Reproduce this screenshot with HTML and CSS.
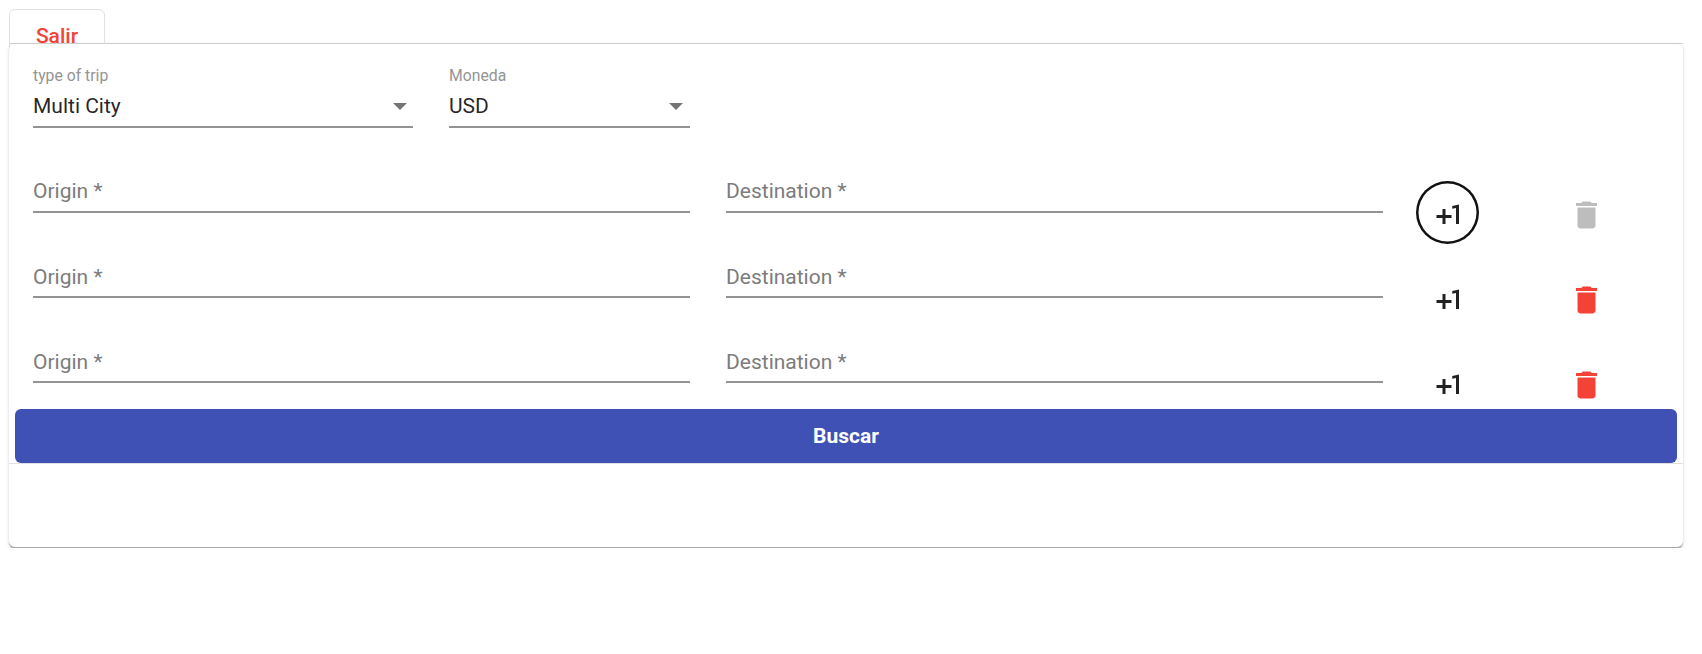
FILE: index.html
```html
<!DOCTYPE html>
<html lang="es">
<head>
<meta charset="utf-8">
<title>Buscar</title>
<link rel="stylesheet" href="styles.css">
</head>
<body>
<svg class="defs" width="0" height="0">
  <symbol id="plus-one" viewBox="0 0 24 24"><path d="M10 8H8v4H4v2h4v4h2v-4h4v-2h-4zm4.500-1.920V7.900l2.500-.5V18h2V5z"/></symbol>
  <symbol id="trash" viewBox="0 0 24 24"><path d="M6 19c0 1.100.9 2 2 2h8c1.100 0 2-.9 2-2V7H6v12zM19 4h-3.500l-1-1h-5l-1 1H5v2h14V4z"/></symbol>
</svg>
<header class="bar"><button class="exit">Salir</button></header>
<main class="card">
  <div class="search">
    <div class="grid selects">
      <div class="field trip"><span class="label">type of trip</span><span class="value">Multi City<i class="arrow"></i></span></div>
      <div class="field currency"><span class="label">Moneda</span><span class="value">USD<i class="arrow"></i></span></div>
    </div>
    <div class="grid leg first">
      <div class="field">Origin *</div><div class="field">Destination *</div>
      <button class="add ring"><svg class="icon"><use href="#plus-one"/></svg></button>
      <button class="remove off"><svg class="icon"><use href="#trash"/></svg></button>
    </div>
    <div class="grid leg">
      <div class="field">Origin *</div><div class="field">Destination *</div>
      <button class="add"><svg class="icon"><use href="#plus-one"/></svg></button>
      <button class="remove"><svg class="icon"><use href="#trash"/></svg></button>
    </div>
    <div class="grid leg">
      <div class="field">Origin *</div><div class="field">Destination *</div>
      <button class="add"><svg class="icon"><use href="#plus-one"/></svg></button>
      <button class="remove"><svg class="icon"><use href="#trash"/></svg></button>
    </div>
  </div>
  <button class="submit">Buscar</button>
  <div class="results"></div>
</main>
</body>
</html>
```
FILE: styles.css
```css
* { box-sizing: border-box; }
body {
  margin: 0;
  padding: 9px 19px 0 9px;
  background: #fff;
  color: rgba(0, 0, 0, .87);
  font: 400 21px/24px Roboto, sans-serif;
}
button { font: inherit; border: 0; background: none; padding: 0; margin: 0; }
.defs { display: block; height: 0; }
.bar { height: 35px; border-bottom: 1px solid #d2d2d2; }
.exit {
  display: block;
  width: 96px;
  height: 54px;
  border: 1px solid #e0e0e0;
  border-radius: 6px;
  color: #f44336;
  font-weight: 500;
}
.card {
  position: relative;
  height: 504px;
  background: #fff;
  border-bottom: 1px solid #a8a8a8;
  border-radius: 6px;
  box-shadow: 0 1px 1px rgba(0, 0, 0, .24), 0 1px 4px rgba(0, 0, 0, .12);
}
.search { height: 365px; padding: 19px 0 0 24px; }
.grid { display: grid; align-items: start; }
.selects { grid-template-columns: 380px 241px; column-gap: 36px; height: 65px; }
.selects .field { display: flex; flex-direction: column; height: 65px; border-bottom: 2px solid #949494; }
.label { font-size: 15.75px; line-height: 26px; color: #949494; }
.value { display: flex; justify-content: space-between; align-items: center; padding: 4px 6px 0 0; line-height: 26px; }
.currency .value { padding-right: 7px; }
.arrow { border: 7px solid transparent; border-top-color: #757575; border-bottom: 0; }
.leg { grid-template-columns: 657px 657px 62px 62px; column-gap: 36px; height: 85px; }
.leg.first { margin-top: 49px; }
.leg .field { height: 36px; border-bottom: 2px solid #949494; color: #7c7c7c; padding-top: 3px; }
.leg.first .field { padding-top: 2px; }
.add, .remove {
  display: flex;
  align-items: center;
  justify-content: center;
  width: 63px;
  height: 63px;
  border-radius: 50%;
  color: #212121;
  margin: 4px 0 0 -3px;
}
.ring { box-shadow: inset 0 0 0 2.5px #111; }
.remove { color: #f44336; margin-left: 37.5px; }
.icon { width: 36px; height: 36px; fill: currentColor; margin-top: 5px; transform: translateX(.5px); }
.remove.off { color: #bdbdbd; }
.submit {
  display: block;
  width: calc(100% - 12px);
  height: 54px;
  margin: 0 6px;
  border-radius: 6px;
  background: #3f51b5;
  color: #fff;
  font-weight: 700;
}
.results { border-top: 1px solid #e0e0e0; }
```
